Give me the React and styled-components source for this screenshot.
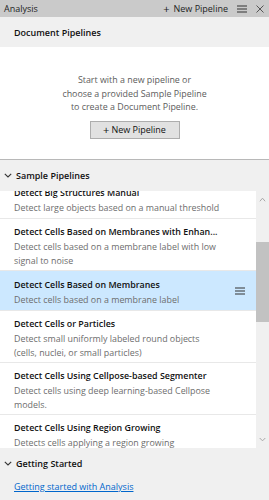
import React, { useLayoutEffect, useRef } from 'react';
import styled, { createGlobalStyle } from 'styled-components';

const GlobalStyle = createGlobalStyle`
  html, body {
    margin: 0;
    padding: 0;
    background: #ffffff;
  }
  body {
    font-family: "Open Sans", "Noto Sans", Arial, sans-serif;
    font-size: 8.9px;
    color: #1a1a1a;
  }
  * {
    box-sizing: border-box;
  }
`;

const Panel = styled.div`
  width: 269px;
  height: 500px;
  display: flex;
  flex-direction: column;
  overflow: hidden;
`;

const TitleBar = styled.div`
  height: 17px;
  flex: none;
  display: flex;
  align-items: center;
  padding: 0 5px 0 4px;
  background: #cacaca;
  color: #1e1e1e;
  font-size: 9px;
`;

const TitleText = styled.div`
  flex: 1;
`;

const BarAction = styled.div`
  display: flex;
  align-items: center;
  gap: 4px;
  margin-right: 9px;
  font-size: 9px;
`;

const Plus = styled.span`
  font-size: 11px;
  line-height: 1;
  margin-top: -1px;
`;

const BarIcon = styled.div`
  display: flex;
  align-items: center;
  justify-content: center;
  width: ${(p) => p.$w}px;
  margin-left: ${(p) => p.$ml || 0}px;
`;

const SectionHeader = styled.div`
  height: ${(p) => p.$h}px;
  flex: none;
  display: flex;
  align-items: center;
  gap: 4px;
  padding-left: ${(p) => (p.$chevron ? 4 : 14)}px;
  background: #f0f0f0;
  font-weight: 600;
  font-size: 9px;
  color: #111;
`;

const DocBody = styled.div`
  height: 113px;
  flex: none;
  display: flex;
  flex-direction: column;
  align-items: center;
  padding-top: 26px;
  background: #ffffff;
  border-bottom: 1px solid #b8b8b8;
`;

const Hint = styled.div`
  text-align: center;
  line-height: 13.5px;
  color: #5c5c5c;
`;

const NewButton = styled.button`
  margin-top: 7px;
  width: 90px;
  height: 18px;
  display: flex;
  align-items: center;
  justify-content: center;
  gap: 2px;
  padding: 0;
  border: 1px solid #adadad;
  background: #e1e1e1;
  font-family: inherit;
  font-size: 9px;
  color: #111;
`;

const ListArea = styled.div`
  height: 257px;
  flex: none;
  display: flex;
`;

const Viewport = styled.div`
  flex: 1;
  overflow: hidden;
  background: #ffffff;
`;

const Row = styled.div`
  display: flex;
  align-items: center;
  min-height: 40px;
  padding: 5px 0 2px 14px;
  border-bottom: 1px solid #e8e8e8;
  background: ${(p) => (p.$selected ? '#cce8ff' : '#ffffff')};
`;

const RowText = styled.div`
  flex: 1;
  min-width: 0;
`;

const RowTitle = styled.div`
  line-height: 16px;
  font-weight: 600;
  color: #111;
  white-space: nowrap;
`;

const RowDesc = styled.div`
  line-height: 14px;
  color: #6d6d6d;
`;

const RowMenu = styled.div`
  width: 36px;
  flex: none;
  display: flex;
  justify-content: center;
  padding: 0 0 2px 3px;
`;

const ScrollBar = styled.div`
  width: 13px;
  flex: none;
  display: flex;
  flex-direction: column;
  align-items: center;
  background: #f0f0f0;
`;

const ArrowBox = styled.div`
  height: 17px;
  display: flex;
  align-items: center;
  justify-content: center;
`;

const Track = styled.div`
  flex: 1;
  width: 100%;
`;

const Thumb = styled.div`
  width: 100%;
  background: #c2c2c2;
`;

const LinkArea = styled.div`
  flex: 1;
  padding: 2px 0 0 14px;
  background: #f0f0f0;
`;

const Link = styled.a`
  color: #0066cc;
  text-decoration: underline;
  font-size: 9px;
`;

const Hamburger = ({ color = '#333' }) => (
  <svg width="10" height="8" viewBox="0 0 10 8">
    <path d="M0 1h10M0 4h10M0 7h10" stroke={color} strokeWidth="1.2" />
  </svg>
);

const Close = () => (
  <svg width="8" height="8" viewBox="0 0 8 8">
    <path d="M0.5 0.5l7 7M7.5 0.5l-7 7" stroke="#555" strokeWidth="1" />
  </svg>
);

const Chevron = ({ up, color = '#333', w = 8 }) => (
  <svg width={w} height="5" viewBox="0 0 8 5">
    <path
      d={up ? 'M1 4.5l3-3.5 3 3.5' : 'M0.8 0.8l3.2 3.2 3.2-3.2'}
      stroke={color}
      strokeWidth="1.1"
      fill="none"
    />
  </svg>
);

const pipelines = [
  {
    title: 'Detect Big Structures Manual',
    desc: 'Detect large objects based on a manual threshold',
  },
  {
    title: 'Detect Cells Based on Membranes with Enhan...',
    desc: 'Detect cells based on a membrane label with low signal to noise',
  },
  {
    title: 'Detect Cells Based on Membranes',
    desc: 'Detect cells based on a membrane label',
    selected: true,
  },
  {
    title: 'Detect Cells or Particles',
    desc: 'Detect small uniformly labeled round objects (cells, nuclei, or small particles)',
  },
  {
    title: 'Detect Cells Using Cellpose-based Segmenter',
    desc: 'Detect cells using deep learning-based Cellpose models.',
  },
  {
    title: 'Detect Cells Using Region Growing',
    desc: 'Detects cells applying a region growing segmentation',
  },
];

const App = () => {
  const viewRef = useRef(null);

  useLayoutEffect(() => {
    if (viewRef.current) viewRef.current.scrollTop = 12;
  }, []);

  return (
    <Panel>
      <GlobalStyle />
      <TitleBar>
        <TitleText>Analysis</TitleText>
        <BarAction>
          <Plus>+</Plus>
          <span>New Pipeline</span>
        </BarAction>
        <BarIcon $w={10}>
          <Hamburger />
        </BarIcon>
        <BarIcon $w={8} $ml={9}>
          <Close />
        </BarIcon>
      </TitleBar>

      <SectionHeader $h={30}>Document Pipelines</SectionHeader>
      <DocBody>
        <Hint>
          Start with a new pipeline or
          <br />
          choose a provided Sample Pipeline
          <br />
          to create a Document Pipeline.
        </Hint>
        <NewButton>
          <Plus>+</Plus>
          New Pipeline
        </NewButton>
      </DocBody>

      <SectionHeader $h={31} $chevron>
        <Chevron />
        Sample Pipelines
      </SectionHeader>
      <ListArea>
        <Viewport ref={viewRef}>
          {pipelines.map((p) => (
            <Row key={p.title} $selected={p.selected}>
              <RowText>
                <RowTitle>{p.title}</RowTitle>
                <RowDesc>{p.desc}</RowDesc>
              </RowText>
              <RowMenu>{p.selected && <Hamburger />}</RowMenu>
            </Row>
          ))}
        </Viewport>
        <ScrollBar>
          <ArrowBox>
            <Chevron up color="#a6a6a6" w={7} />
          </ArrowBox>
          <Track>
            <Thumb style={{ marginTop: 34, height: 80 }} />
          </Track>
          <ArrowBox>
            <Chevron color="#a6a6a6" w={7} />
          </ArrowBox>
        </ScrollBar>
      </ListArea>

      <SectionHeader $h={30} $chevron>
        <Chevron />
        Getting Started
      </SectionHeader>
      <LinkArea>
        <Link href="#">Getting started with Analysis</Link>
      </LinkArea>
    </Panel>
  );
};

export default App;
